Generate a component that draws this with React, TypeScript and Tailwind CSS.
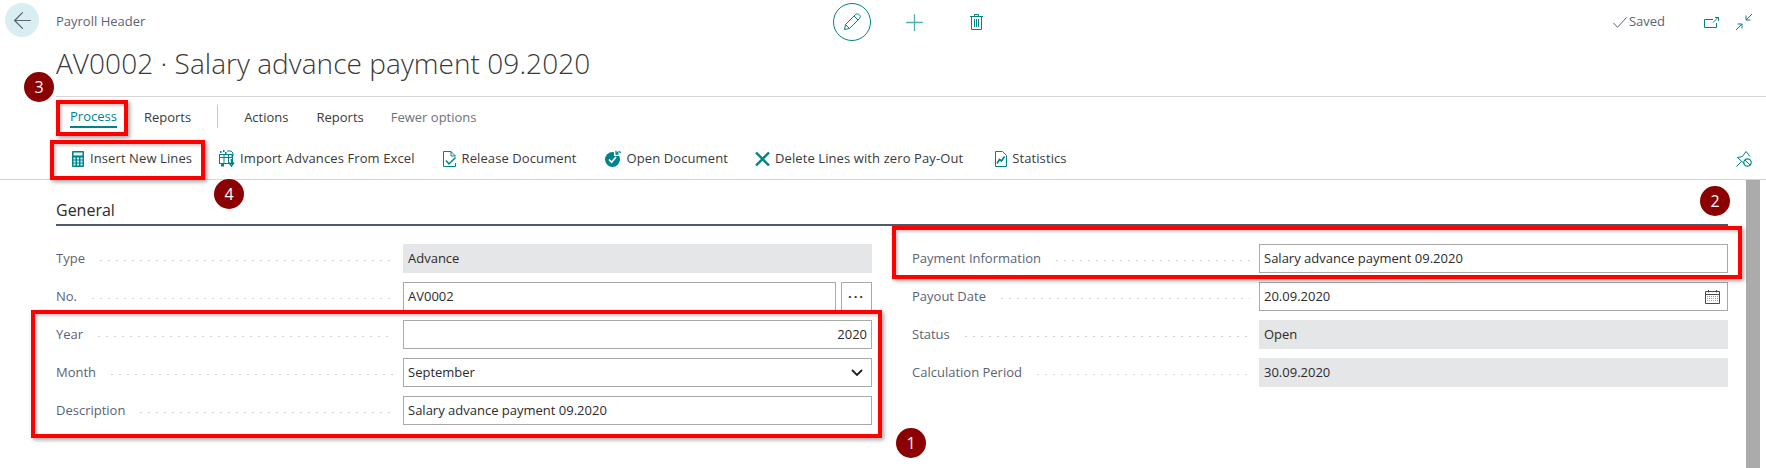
import type { ReactNode } from 'react';
import { ArrowLeft, Plus } from 'lucide-react';

const sans = "font-['Open_Sans','Noto_Sans',sans-serif]";

const Calculator = () => (
  <svg width="12" height="16" viewBox="0 0 12 16" className="text-[#00838a]">
    <rect width="12" height="16" rx="1" fill="currentColor" />
    <rect x="1.500" y="1.500" width="9" height="3" fill="#dff1f2" />
    <path d="M1.500 6.500h2v2h-2zM5 6.500h2v2H5zM8.500 6.500h2v2h-2zM1.500 9.500h2v2h-2zM5 9.500h2v2H5zM8.500 9.500h2v2h-2zM1.500 12.500h2v2h-2zM5 12.500h2v2H5zM8.500 12.500h2v2h-2z" fill="#dff1f2" />
  </svg>
);

const ImportIcon = () => (
  <svg width="16" height="17" viewBox="0 0 16 17" className="text-[#00838a]">
    <rect x="0.500" y="4.500" width="13" height="9" fill="none" stroke="currentColor" />
    <path d="M0 7.500h14M5 4v10M9.500 4v10" stroke="currentColor" />
    <path d="M1 1h1.500v2H1zM4 0h1.500v2H4zM6 2h1.500v2H6zM2 14h3v2.500H2z" fill="currentColor" />
    <path d="M8 1h4l2 2v3h-2" fill="none" stroke="currentColor" />
    <path d="M12.500 9v5M10 12.500l2.500 3.500 2.500-3.500" fill="none" stroke="currentColor" strokeWidth="1.500" />
  </svg>
);

const ReleaseIcon = () => (
  <svg width="14" height="16" viewBox="0 0 14 16" className="text-[#00838a]">
    <path d="M12.500 12v3.500H0.500V0.500H8L12.500 5" fill="none" stroke="currentColor" />
    <path d="M8 0.500V5H12.500" fill="none" stroke="currentColor" />
    <path d="M3 9.500l3 3.500L12.500 6.500" fill="none" stroke="currentColor" strokeWidth="1.500" />
  </svg>
);

const OpenDocIcon = () => (
  <svg width="17" height="17" viewBox="0 0 17 17" className="text-[#00838a]">
    <circle cx="7.500" cy="9.500" r="7.500" fill="currentColor" />
    <path d="M4 9.500l2.600 2.800L11 7" fill="none" stroke="#fff" strokeWidth="1.700" />
    <path d="M9 0h8v6H9z" fill="#fff" />
    <path d="M11.500 5c0-3 2.500-4 4.500-2.500M11 .8V4h3" fill="none" stroke="currentColor" strokeWidth="1.200" />
  </svg>
);

const DeleteX = () => (
  <svg width="15" height="14" viewBox="0 0 15 14" className="text-[#00838a]">
    <path d="M1 0.500L14 13.500M14 0.500L1 13.500" stroke="currentColor" strokeWidth="2.400" />
  </svg>
);

const StatsIcon = () => (
  <svg width="12" height="16" viewBox="0 0 12 16" className="text-[#00838a]">
    <path d="M0.500 0.500H7.500L11.500 4.500V15.500H0.500Z" fill="none" stroke="currentColor" />
    <path d="M2 12.500l2.500-4 2 1.500L9.500 5.500" fill="none" stroke="currentColor" strokeWidth="1.600" />
  </svg>
);

const Pencil = () => (
  <svg width="18" height="18" viewBox="0 0 18 18" className="text-[#00838a]">
    <path d="M1.500 16.500l1-5L12.500 1.500c1-1 3-.5 4 .5s1 2.500 0 3.500L6.500 15.500zM2.500 11.500l4 4M11 3l4 4" fill="none" stroke="currentColor" />
  </svg>
);

const Trash = () => (
  <svg width="13" height="16" viewBox="0 0 13 16" className="text-[#00838a]">
    <path d="M0 2.500h13M4.500 2.500V.5h4v2M1.500 2.500v13h10v-13" fill="none" stroke="currentColor" />
    <path d="M4.500 5v8M6.500 5v8M8.500 5v8" stroke="currentColor" />
  </svg>
);

const SavedCheck = () => (
  <svg width="14" height="11" viewBox="0 0 14 11" className="text-[#5b6373]">
    <path d="M0.500 6l4 4.300L13.500 0.500" fill="none" stroke="currentColor" />
  </svg>
);

const PopOut = () => (
  <svg width="15" height="11" viewBox="0 0 15 11" className="text-[#00838a]">
    <path d="M9 2.500H0.500v8h12V6" fill="none" stroke="currentColor" />
    <path d="M9 5.500l5-5M11 .5h3.500V4" fill="none" stroke="currentColor" />
  </svg>
);

const Collapse = () => (
  <svg width="16" height="16" viewBox="0 0 16 16" className="text-[#00838a]">
    <path d="M16 0L10 6M10 1.500V6h4.500M0 16l6-6M1.500 10H6v4.500" fill="none" stroke="currentColor" />
  </svg>
);

const PinOff = () => (
  <svg width="16" height="16" viewBox="0 0 16 16" className="text-[#00838a]">
    <path d="M0.500 15.500l5-5M1.500 6.500l6.500 6M1.500 6.500l5-1L10 .5l4 5" fill="none" stroke="currentColor" />
    <circle cx="11.500" cy="11.500" r="3.700" fill="#fff" stroke="currentColor" strokeWidth="1.200" />
    <path d="M9 9l5 5" stroke="currentColor" />
  </svg>
);

const CalendarIcon = () => (
  <svg width="15" height="14" viewBox="0 0 15 14" className="text-[#4a4a4a]">
    <path d="M0.500 1.500h14v12H0.500zM0.500 4.500h14M3.500 0v2.500M11.500 0v2.500" fill="none" stroke="currentColor" />
    <path d="M2 6.500h11M2 8.500h11M2 10.500h11" stroke="#a0a0a0" strokeDasharray="1 1" />
  </svg>
);

const Chevron = () => (
  <svg width="12" height="7" viewBox="0 0 12 7" className="mr-1 text-[#1f1f1f]">
    <path d="M1 1l5 5 5-5" fill="none" stroke="currentColor" strokeWidth="1.800" />
  </svg>
);

const ActionItem = ({ icon, label, gap = 'gap-[5px]' }: { icon: ReactNode; label: string; gap?: string }) => (
  <div className={`flex items-center ${gap} text-[13px] tracking-[0.1px] text-[#3a3a3a]`}>
    {icon}
    <span>{label}</span>
  </div>
);

const Row = ({ label, children }: { label: string; children: ReactNode }) => (
  <div className="flex h-[29px] items-center">
    <span className="text-[13px] text-[#5b6373] whitespace-nowrap">{label}</span>
    <span className="ml-3 mr-[9px] mt-[3px] h-[3px] flex-1 bg-[radial-gradient(circle,#cfcfcf_1px,transparent_1px)] bg-[length:8px_3px]" />
    {children}
  </div>
);

const ReadOnly = ({ value }: { value: string }) => (
  <div className="flex h-[29px] w-[469px] items-center bg-[#e5e6e8] px-[5px] text-[13px] text-[#2b2b2b]">{value}</div>
);

const Field = ({ value, width = 'w-[469px]', right, children }: { value: string; width?: string; right?: boolean; children?: ReactNode }) => (
  <div className={`${width} flex h-[29px] items-center justify-between border border-[#a9a9a9] bg-white px-[4px] text-[13px] text-[#2b2b2b]`}>
    {right && <span />}
    <span>{value}</span>
    {children}
  </div>
);

const Badge = ({ n, className }: { n: string; className: string }) => (
  <div className={`absolute flex h-[30px] w-[30px] items-center justify-center rounded-full bg-[#8b0000] text-[16px] text-white ${className}`}>{n}</div>
);

const Callout = ({ className }: { className: string }) => (
  <div className={`absolute border-[4px] border-[#ff0000] shadow-[2px_2px_4px_rgba(0,0,0,0.35),inset_2px_2px_3px_rgba(0,0,0,0.2)] ${className}`} />
);

export default function App() {
  return (
    <div className={`relative h-[468px] w-[1766px] overflow-hidden bg-white ${sans}`}>
      {/* Top bar */}
      <div className="flex h-[43px] items-center pl-[5px] pr-[14px] pt-[1px]">
        <div className="-mt-[4px] flex h-[34px] w-[34px] items-center justify-center rounded-full bg-[#d9eef0]">
          <ArrowLeft className="h-[27px] w-[27px] text-[#5a6472]" strokeWidth={1.1} />
        </div>
        <span className="ml-[17px] text-[13px] text-[#5b6373]">Payroll Header</span>
        <div className="ml-[688px] flex items-center">
          <div className="flex h-[38px] w-[38px] items-center justify-center rounded-full border border-[#00838a]">
            <Pencil />
          </div>
          <Plus className="ml-[30px] h-[27px] w-[27px] text-[#4fb0b5]" strokeWidth={1.2} />
          <div className="ml-[42px]"><Trash /></div>
        </div>
        <div className="ml-auto flex items-center">
          <SavedCheck />
          <span className="ml-[2px] text-[13px] text-[#5b6373]">Saved</span>
          <div className="ml-[39px]"><PopOut /></div>
          <div className="ml-[17px]"><Collapse /></div>
        </div>
      </div>

      {/* Title */}
      <div className="ml-[56px] flex h-[53px] items-center pb-[13px]">
        <h1 className="text-[28px] font-light tracking-[0.05px] text-[#3a3a3a] whitespace-nowrap">AV0002 · Salary advance payment 09.2020</h1>
      </div>

      {/* Tabs */}
      <div className="ml-[56px] flex h-[33px] items-start border-t border-[#d5d6da] pl-[14px] text-[13px] text-[#3a3a3a]">
        <div className="mt-[11px] flex h-[20px] items-center border-b-2 border-[#00838a] text-[#00838a]">Process</div>
        <span className="ml-[27px] mt-[11px]">Reports</span>
        <span className="ml-[26px] mt-[8px] h-[23px] w-px bg-[#c8c8c8]" />
        <span className="ml-[26px] mt-[11px]">Actions</span>
        <span className="ml-[28px] mt-[11px]">Reports</span>
        <span className="ml-[27px] mt-[11px] text-[#6b7280]">Fewer options</span>
      </div>

      {/* Action bar */}
      <div className="flex h-[51px] items-center border-b border-[#d5d6da] pl-[72px] pr-[14px] pt-[9px]">
        <ActionItem icon={<Calculator />} label="Insert New Lines" gap="gap-[6px]" />
        <div className="ml-[27px]"><ActionItem icon={<ImportIcon />} label="Import Advances From Excel" /></div>
        <div className="ml-[28px]"><ActionItem icon={<ReleaseIcon />} label="Release Document" /></div>
        <div className="ml-[28px]"><ActionItem icon={<OpenDocIcon />} label="Open Document" /></div>
        <div className="ml-[27px]"><ActionItem icon={<DeleteX />} label="Delete Lines with zero Pay-Out" /></div>
        <div className="ml-[32px]"><ActionItem icon={<StatsIcon />} label="Statistics" /></div>
        <div className="ml-auto"><PinOff /></div>
      </div>

      {/* General section */}
      <div className="ml-[56px] mr-[38px]">
        <div className="flex h-[46px] items-end border-b-2 border-[#505a6e] pb-[2px]">
          <h2 className="text-[16px] font-medium text-[#2b2b2b]">General</h2>
        </div>
        <div className="mt-[18px] flex">
          <div className="flex w-[816px] flex-col gap-[9px]">
            <Row label="Type"><ReadOnly value="Advance" /></Row>
            <Row label="No.">
              <Field value="AV0002" width="w-[433px]" />
              <div className="ml-[5px] flex h-[29px] w-[31px] items-center justify-center border border-[#a9a9a9] text-[13px] font-bold tracking-[2px] text-[#333]">···</div>
            </Row>
            <Row label="Year"><Field value="2020" right /></Row>
            <Row label="Month">
              <Field value="September"><Chevron /></Field>
            </Row>
            <Row label="Description"><Field value="Salary advance payment 09.2020" /></Row>
          </div>
          <div className="ml-[40px] flex flex-1 flex-col gap-[9px]">
            <Row label="Payment Information"><Field value="Salary advance payment 09.2020" /></Row>
            <Row label="Payout Date">
              <Field value="20.09.2020"><span className="mr-[3px]"><CalendarIcon /></span></Field>
            </Row>
            <Row label="Status"><ReadOnly value="Open" /></Row>
            <Row label="Calculation Period"><ReadOnly value="30.09.2020" /></Row>
          </div>
        </div>
      </div>

      {/* Scrollbar */}
      <div className="absolute bottom-0 right-[6px] top-[180px] w-[14px] bg-[#ababab]" />

      {/* Callouts */}
      <Callout className="left-[56px] top-[100px] h-[36px] w-[72px]" />
      <Callout className="left-[50px] top-[140px] h-[40px] w-[155px]" />
      <Callout className="left-[31px] top-[310px] h-[128px] w-[851px]" />
      <Callout className="left-[892px] top-[226px] h-[53px] w-[850px]" />
      <Badge n="1" className="left-[896px] top-[428px]" />
      <Badge n="2" className="left-[1700px] top-[186px]" />
      <Badge n="3" className="left-[24px] top-[72px]" />
      <Badge n="4" className="left-[214px] top-[179px]" />
    </div>
  );
}
